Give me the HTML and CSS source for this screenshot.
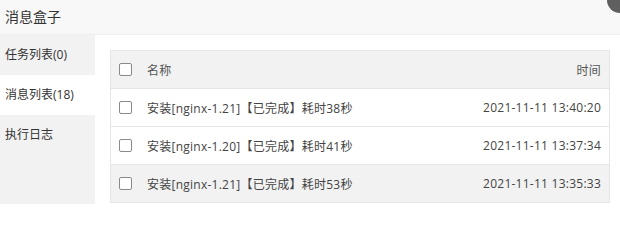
FILE: index.html
```html
<!DOCTYPE html>
<html lang="zh-CN">
<head>
<meta charset="utf-8">
<title>消息盒子</title>
<link rel="stylesheet" href="styles.css">
</head>
<body>
<div class="box">
  <div class="title">消息盒子</div>
  <span class="close"></span>
  <div class="body">
    <ul class="side">
      <li class="tab">任务列表(0)</li>
      <li class="tab active">消息列表(18)</li>
      <li class="tab">执行日志</li>
    </ul>
    <div class="main">
      <table class="grid">
        <thead>
          <tr><th class="ck"><span class="cb"></span></th><th>名称</th><th class="tm">时间</th></tr>
        </thead>
        <tbody>
          <tr><td class="ck"><span class="cb"></span></td><td>安装[nginx-1.21]【已完成】耗时38秒</td><td class="tm">2021-11-11 13:40:20</td></tr>
          <tr><td class="ck"><span class="cb"></span></td><td>安装[nginx-1.20]【已完成】耗时41秒</td><td class="tm">2021-11-11 13:37:34</td></tr>
          <tr class="hover"><td class="ck"><span class="cb"></span></td><td>安装[nginx-1.21]【已完成】耗时53秒</td><td class="tm">2021-11-11 13:35:33</td></tr>
        </tbody>
      </table>
    </div>
  </div>
</div>
</body>
</html>
```
FILE: styles.css
```css
html, body {
  margin: 0;
  padding: 0;
  background: #fff;
  overflow: hidden;
}
body {
  font-family: "Open Sans", "Noto Sans CJK SC", sans-serif;
  font-size: 12px;
  color: #333;
}
.box {
  position: relative;
  width: 620px;
  height: 204px;
  overflow: hidden;
}
.title {
  height: 34px;
  line-height: 34px;
  padding-left: 5px;
  font-size: 14px;
  color: #333;
  background: #f8f8f8;
  border-bottom: 1px solid #eee;
}
.close {
  position: absolute;
  right: -13px;
  top: -13px;
  width: 26px;
  height: 26px;
  border-radius: 50%;
  background: #5f5f5f;
}
.body {
  display: flex;
  height: 169px;
}
.side {
  list-style: none;
  margin: 0;
  padding: 0;
  width: 95px;
  flex: none;
  background: #f2f2f2;
}
.tab {
  height: 40px;
  line-height: 40px;
  padding-left: 5px;
  color: #333;
}
.tab.active {
  background: #fff;
}
.main {
  flex: 1;
  padding: 15px 10px 0 15px;
}
.grid {
  width: 100%;
  border-collapse: collapse;
  border: 1px solid #e6e6e6;
}
.grid th, .grid td {
  height: 37px;
  padding: 0 8px;
  text-align: left;
  font-weight: normal;
  color: #444;
  letter-spacing: 0.25px;
  border-bottom: 1px solid #e6e6e6;
}
.grid th {
  color: #555;
}
.grid thead tr {
  background: #f2f2f2;
}
.grid tr.hover {
  background: #f2f2f2;
}
.grid .ck {
  width: 20px;
  padding-right: 0;
}
.grid .tm {
  text-align: right;
  padding-right: 8px;
}
.cb {
  display: block;
  width: 11px;
  height: 11px;
  border: 1px solid #8a8a8a;
  border-radius: 2px;
  background: #fff;
}
```
